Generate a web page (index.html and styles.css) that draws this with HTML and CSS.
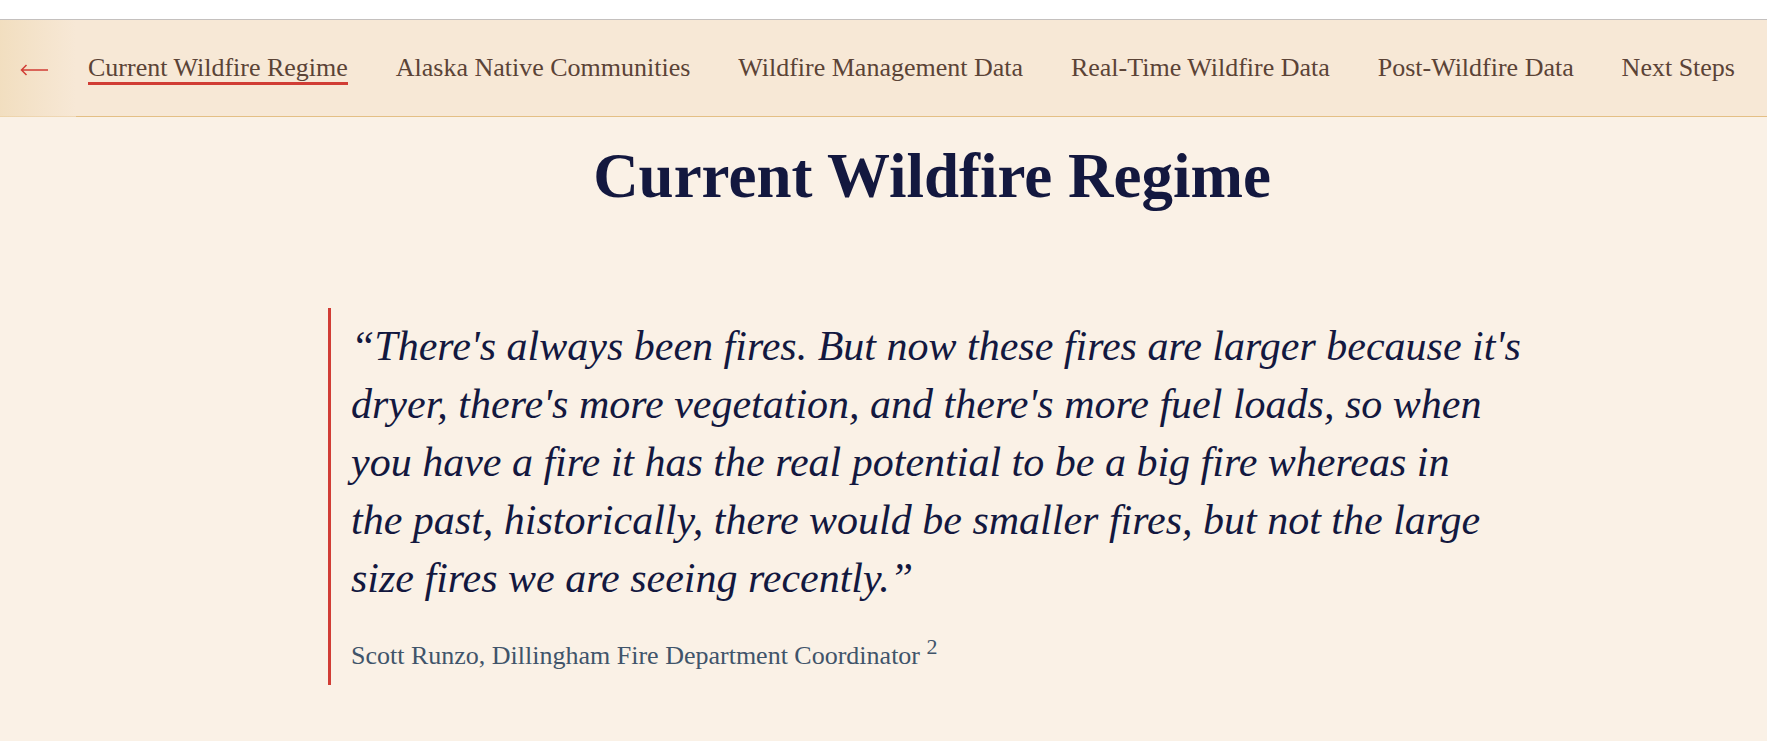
FILE: index.html
```html
<!DOCTYPE html>
<html lang="en">
<head>
<meta charset="utf-8">
<meta name="viewport" content="width=device-width, initial-scale=1">
<title>Current Wildfire Regime</title>
<link rel="stylesheet" href="styles.css">
</head>
<body>
<nav class="section-nav" aria-label="Sections">
  <button class="scroll-back" type="button" aria-label="Scroll back">
    <svg class="arrow" viewBox="0 0 28 12" aria-hidden="true">
      <path d="M28 6H1.500M6.500 1L1.500 6L6.500 11"/>
    </svg>
  </button>
  <ul class="section-list">
    <li><a class="section-link current" href="#current" aria-current="true">Current Wildfire Regime</a></li>
    <li><a class="section-link" href="#communities">Alaska Native Communities</a></li>
    <li><a class="section-link" href="#management">Wildfire Management Data</a></li>
    <li><a class="section-link" href="#real-time">Real-Time Wildfire Data</a></li>
    <li><a class="section-link" href="#post">Post-Wildfire Data</a></li>
    <li><a class="section-link" href="#next">Next Steps</a></li>
  </ul>
</nav>
<main class="content" id="current">
  <h1 class="title">Current Wildfire Regime</h1>
  <blockquote class="quote">
    <p class="quote-text">“There's always been fires. But now these fires are larger because it's dryer, there's more vegetation, and there's more fuel loads, so when you have a fire it has the real potential to be a big fire whereas in the&nbsp;past, historically, there would be smaller fires, but not the large size fires we are seeing recently.”</p>
    <footer class="quote-source">Scott Runzo, Dillingham Fire Department Coordinator <sup class="note">2</sup></footer>
  </blockquote>
</main>
</body>
</html>
```
FILE: styles.css
```css
* {
  box-sizing: border-box;
}

body {
  display: flex;
  flex-direction: column;
  min-height: 100vh;
  margin: 0;
  padding-top: 19px;
  background: #fff;
  color: #13183f;
  font-family: "Liberation Serif", "Times New Roman", serif;
}

.section-nav {
  position: relative;
  padding: 34px 32px 31px 88px;
  border-top: 1px solid #c4c0be;
  border-bottom: 1px solid #e4bf85;
  background: #f7e8d6;
}

.scroll-back {
  position: absolute;
  top: 0;
  bottom: -1px;
  left: 0;
  width: 76px;
  padding: 3px 0 0 20px;
  border: 0;
  background: linear-gradient(to right, rgb(240 219 184 / 75%), rgb(247 232 214 / 60%));
  text-align: left;
  cursor: pointer;
}

.arrow {
  display: block;
  width: 28px;
  height: 12px;
  fill: none;
  stroke: #d13d35;
  stroke-width: 1.5;
}

.section-list {
  display: flex;
  justify-content: space-between;
  margin: 0;
  padding: 0;
  list-style: none;
}

.section-link {
  display: block;
  border-bottom: 3px solid transparent;
  color: #5b4336;
  font-size: 26px;
  line-height: 28px;
  text-decoration: none;
  white-space: nowrap;
}

.section-link.current {
  border-color: #d13d35;
}

.content {
  flex: 1;
  padding: 19px 96px 52px 193px;
  background: #faf1e6;
}

.title {
  margin: 0 0 92px;
  font-size: 63px;
  font-weight: 700;
  line-height: 80px;
  text-align: center;
}

.quote {
  max-width: 1208px;
  margin: 0 auto;
  padding: 9px 0 9px 20px;
  border-left: 3px solid #d13d35;
}

.quote-text {
  margin: 0 0 29px;
  font-size: 42px;
  font-style: italic;
  line-height: 58px;
}

.quote-source {
  color: #40546a;
  font-size: 26px;
  line-height: 40px;
}

.note {
  font-size: 22px;
  line-height: 0;
}
```
